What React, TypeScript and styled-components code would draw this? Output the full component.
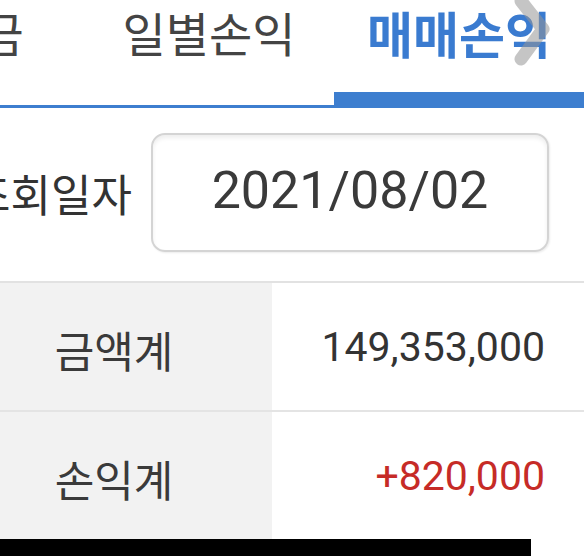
import styled, { createGlobalStyle } from "styled-components";

const GlobalStyle = createGlobalStyle`
    html, body {
        margin: 0;
        padding: 0;
        background: #fff;
        overflow: hidden;
    }
    * {
        box-sizing: border-box;
    }
`

const KR = `"Noto Sans CJK KR", "Noto Sans", sans-serif`
const NUM = `Roboto, "Noto Sans CJK KR", sans-serif`

const tabs = ["예수금", "일별손익", "매매손익"]

const rows = [
    {label: "금액계", value: "149,353,000", profit: false},
    {label: "손익계", value: "+820,000", profit: true},
]

export default function App() {
    return (
        <>
            <GlobalStyle/>
            <Viewport>
                <Page>
                    <TabBar>
                        {tabs.map((t, i) => (
                            <Tab key={t} $active={i === tabs.length - 1}>{t}</Tab>
                        ))}
                        <ScrollHint width="40" height="68" viewBox="0 0 40 68">
                            <path d="M10 2 L32 30 L10 60" fill="none" stroke="rgba(150,150,150,0.55)"
                                  strokeWidth="13" strokeLinecap="round" strokeLinejoin="round"/>
                        </ScrollHint>
                    </TabBar>

                    <SearchRow>
                        <SearchLabel>조회일자</SearchLabel>
                        <DateBox>2021/08/02</DateBox>
                    </SearchRow>

                    <Table>
                        {rows.map(r => (
                            <Row key={r.label}>
                                <LabelCell>{r.label}</LabelCell>
                                <ValueCell $profit={r.profit}>{r.value}</ValueCell>
                            </Row>
                        ))}
                    </Table>
                    <BottomBar/>
                </Page>
            </Viewport>
        </>
    );
}

const Viewport = styled.div`
    width: 584px;
    height: 556px;
    overflow: hidden;
`

const Page = styled.div`
    width: 750px;
    margin-left: -166px;
`

const TabBar = styled.div`
    position: relative;
    display: flex;
    height: 108px;
    border-bottom: 3px solid #3d7ecf;
`

const Tab = styled.div<{ $active?: boolean }>`
    flex: 1;
    height: 105px;
    text-align: center;
    padding-top: 7px;
    font-family: ${KR};
    font-size: ${p => p.$active ? "50px" : "47px"};
    line-height: 50px;
    font-weight: ${p => p.$active ? 700 : 400};
    color: ${p => p.$active ? "#3a7bd0" : "#444"};
    border-bottom: ${p => p.$active ? "13px solid #3d7ecf" : "none"};
`

const ScrollHint = styled.svg`
    position: absolute;
    top: -1px;
    right: 33px;
`

const SearchRow = styled.div`
    display: flex;
    align-items: center;
    justify-content: flex-end;
    gap: 19px;
    padding: 25px 35px 29px 0;
    border-bottom: 2px solid #e2e2e2;
`

const SearchLabel = styled.span`
    font-family: ${KR};
    font-size: 44px;
    color: #333;
`

const DateBox = styled.div`
    width: 398px;
    height: 119px;
    display: flex;
    align-items: center;
    justify-content: center;
    border: 2px solid #d4d4d4;
    border-radius: 14px;
    box-shadow: inset 0 3px 4px rgba(0, 0, 0, 0.07), 1px 1px 2px rgba(0, 0, 0, 0.08);
    font-family: ${NUM};
    font-size: 52px;
    color: #3a3a3a;
    padding-bottom: 4px;
`

const Table = styled.div`
    display: flex;
    flex-direction: column;
`

const Row = styled.div`
    display: grid;
    grid-template-columns: 438px 1fr;
    height: 129px;
    border-bottom: 2px solid #e4e4e4;

    &:last-child {
        border-bottom: none;
        height: 127px;
    }
`

const LabelCell = styled.div`
    display: flex;
    align-items: center;
    justify-content: center;
    padding-left: 122px;
    padding-top: 4px;
    background: #f2f2f2;
    font-family: ${KR};
    font-size: 43px;
    color: #3a3a3a;
`

const ValueCell = styled.div<{ $profit?: boolean }>`
    display: flex;
    align-items: center;
    justify-content: flex-end;
    padding-right: 39px;
    font-family: ${NUM};
    font-size: 41px;
    color: ${p => p.$profit ? "#c62b27" : "#333"};
`

const BottomBar = styled.div`
    width: 531px;
    height: 20px;
    margin-left: 166px;
    background: #000;
`
